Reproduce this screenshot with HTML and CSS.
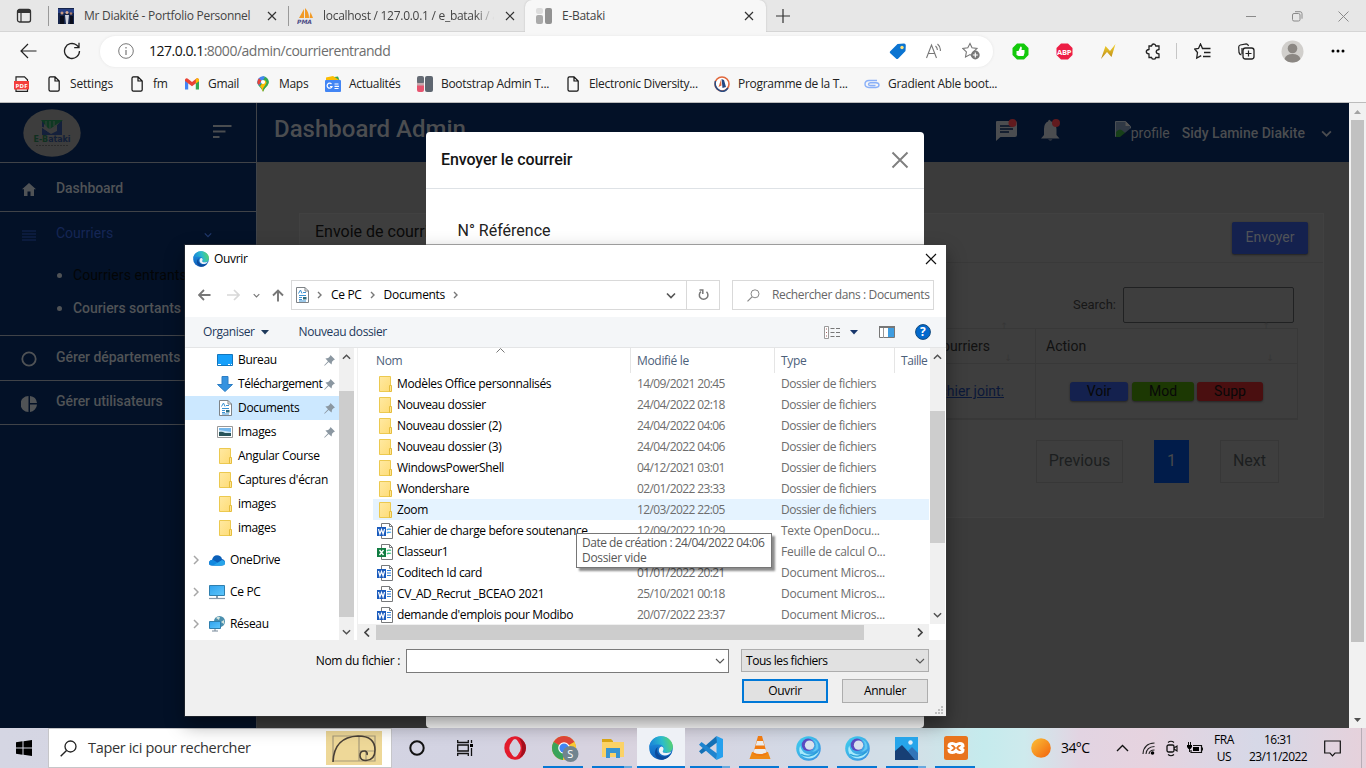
FILE: index.html
```html
<!DOCTYPE html>
<html lang="fr">
<head>
<meta charset="utf-8">
<title>E-Bataki</title>
<link rel="stylesheet" href="styles.css">
</head>
<body>
<svg class="defs" aria-hidden="true">
  <defs>
    <linearGradient id="gFolder" x1="0" y1="0" x2="1" y2="1"><stop offset="0" stop-color="#ffe9a2"/><stop offset="1" stop-color="#fedc77"/></linearGradient>
    <linearGradient id="gEdge" x1="0" y1="0.2" x2="1" y2="0"><stop offset="0" stop-color="#1b86d8"/><stop offset=".5" stop-color="#2bbccb"/><stop offset="1" stop-color="#62d957"/></linearGradient>
    <linearGradient id="gEdge2" x1="0" y1="0" x2="0" y2="1"><stop offset="0" stop-color="#1f9ae6"/><stop offset="1" stop-color="#0f5cb8"/></linearGradient>
    <linearGradient id="gSun" x1="0" y1="0" x2="1" y2="1"><stop offset="0" stop-color="#fbc238"/><stop offset="1" stop-color="#f2620c"/></linearGradient>
    <linearGradient id="gScreen" x1="0" y1="0" x2="1" y2="1"><stop offset="0" stop-color="#2fa2ee"/><stop offset="1" stop-color="#5ec6fb"/></linearGradient>
    <linearGradient id="gSwirl" x1="0" y1="0" x2="1" y2="1"><stop offset="0" stop-color="#3fd0ee"/><stop offset="1" stop-color="#3a8de0"/></linearGradient>
    <linearGradient id="gBolt" x1="0" y1="0" x2="0" y2="1"><stop offset="0" stop-color="#f5d631"/><stop offset="1" stop-color="#b98414"/></linearGradient>
  </defs>
  <symbol id="x" viewBox="0 0 10 10"><path d="M1 1l8 8M9 1l-8 8" fill="none" stroke="currentColor" stroke-width="1.200"/></symbol>
  <symbol id="page" viewBox="0 0 12 16"><path d="M1 2.200Q1 .8 2.400.8H7l4.200 4.200v8.800q0 1.400-1.400 1.400H2.400Q1 15.200 1 13.800zM7 .8V5h4.200" fill="none" stroke="#111" stroke-width="1.200"/></symbol>
  <symbol id="folder" viewBox="0 0 13 16"><path d="M.5.5h11v15H.5z" fill="url(#gFolder)" stroke="#ecc94f"/><path d="M10.500 9.500h2v6h-2z" fill="#ffe592" stroke="#e5bd3d"/></symbol>
  <symbol id="doc" viewBox="0 0 13 16"><path d="M.5.5h8.500l3.500 3.500v11.500H.5z" fill="#fff" stroke="#7e8387"/><path d="M9 .5V4h3.500" fill="none" stroke="#7e8387"/><path d="M2.500 6.500L4.500 3 6 6.500M7 5.500h3M3 8.500h7M3 10.500h3M3 12.500h3M3 14h7" fill="none" stroke="#3b92d2"/><path d="M7 10h3.500v2.500H7z" fill="#2c6a7d"/></symbol>
  <symbol id="word" viewBox="0 0 16 16"><path d="M4.500.5h8l3 3v12h-11z" fill="#fff" stroke="#77797b"/><path d="M12.500.5v3h3" fill="none" stroke="#77797b"/><path d="M10 5.500h4M10 8h4M10 10.500h4" stroke="#2c7cd6"/><path d="M0 4h9v9H0z" fill="#185abd"/><path d="M1.500 6l1.400 5 1.600-4.500 1.600 4.500 1.400-5" fill="none" stroke="#fff" stroke-width="1.200"/></symbol>
  <symbol id="wordodt" viewBox="0 0 16 16"><path d="M4.500.5h8l3 3v12h-11z" fill="#fff" stroke="#77797b"/><path d="M12.500.5v3h3" fill="none" stroke="#77797b"/><path d="M10 7c1.500-2 2.500 0 4-1M10 10c1.500-1.500 2.500 0 4-1" fill="none" stroke="#45a2ea" stroke-width="1.400"/><path d="M0 4h9v9H0z" fill="#185abd"/><path d="M1.500 6l1.400 5 1.600-4.500 1.600 4.500 1.400-5" fill="none" stroke="#fff" stroke-width="1.200"/></symbol>
  <symbol id="excel" viewBox="0 0 16 16"><path d="M4.500.5h8l3 3v12h-11z" fill="#fff" stroke="#77797b"/><path d="M12.500.5v3h3" fill="none" stroke="#77797b"/><path d="M10 7c1.500-2 2.500 0 4-1M10 10c1.500-1.500 2.500 0 4-1" fill="none" stroke="#3fc283" stroke-width="1.400"/><path d="M0 4h9v9H0z" fill="#107c41"/><path d="M2.500 6l4 5M6.500 6l-4 5" stroke="#fff" stroke-width="1.400"/></symbol>
  <symbol id="pin" viewBox="0 0 11 11"><path d="M6.500 0L11 4.500 9.800 5 8 6.800 7.600 9.600 4.600 6.900.7 10.700.2 10.200 4 6.300 1.400 3.500 4.200 3 6 1.200z" fill="#8b97a1"/></symbol>
  <symbol id="chev" viewBox="0 0 10 6"><path d="M1 1l4 4 4-4" fill="none" stroke="currentColor" stroke-width="1.600"/></symbol>
  <symbol id="edge" viewBox="0 0 24 24"><circle cx="12" cy="12" r="11.800" fill="url(#gEdge2)"/><path d="M.3 11C1 4 6.500.2 12 .2c7 0 11.800 5 11.800 10.200 0 4-3 6.400-6.300 6.400-3 0-4.300-1.200-3.500-2.300 1.600-2.600.2-6-4.500-6-3.500 0-7.500.5-9.200 2.500z" fill="url(#gEdge)"/><path d="M8.800 11c-2.200 5 1 10.500 8 9.500 2.300-.4 4-1.500 5.400-3.200C20 21.500 16.500 23.800 12.500 23.800 6 23.500 3.500 14.500 8.800 11z" fill="#0b4a9c"/><path d="M12.800 10.500c2 .8 2.300 2.700 1.200 4.200-.9 1.300.5 2.300 3.500 2.300 2 0 3.800-.8 5-1.700-1.500 3.200-4.500 4.400-7 4.200-4-.3-6.300-3.500-5.500-6.500.4-1.500 1.500-2.500 2.800-2.500z" fill="#ecf2f8"/></symbol>
  <symbol id="swirl" viewBox="0 0 24 24"><circle cx="12" cy="12" r="11.800" fill="url(#gSwirl)"/><path d="M4 9c-3 7 2 12.500 9 12.500 5 0 8-3.500 9.500-7.500-3 4-7 4.500-11 3.500C7 16.500 5 13 4 9z" fill="#a6e9fb"/><path d="M5 17.500c4 3 11 2.500 15.500-2.500" fill="none" stroke="#259fd9" stroke-width="1.300"/><circle cx="11.500" cy="8.500" r="6" fill="#5b4bc0"/><circle cx="13" cy="8.800" r="4.500" fill="#d9e2ed"/><path d="M15 3q7 1 6.500 9-2 3-6 3 4-2 3.500-6.500T15 3z" fill="#63c9f3"/></symbol>
</svg>

<header class="tabs">
  <svg class="tab-actions" width="16" height="16" viewBox="0 0 16 16"><rect x="1.500" y="1.500" width="13" height="12.500" rx="2" fill="none" stroke="#333" stroke-width="1.300"/><path d="M1.500 2h13v3h-13z" fill="#333"/><path d="M5 4v10" stroke="#333" stroke-width="1.200"/></svg>
  <div class="tab tab-one">
    <svg width="16" height="16" viewBox="0 0 16 16"><path d="M0 0h16v16H0z" fill="#16254b"/><path d="M0 1h16v4H0z" fill="#273f83"/><circle cx="4" cy="5" r="1.500" fill="#c79a86"/><circle cx="9" cy="4.500" r="1.500" fill="#d8ab94"/><circle cx="13" cy="5.500" r="1.300" fill="#a87b6b"/><path d="M7 7h4l-1 9H8z" fill="#cfd3de"/><path d="M2 8h4v8H2zM12 8h3v8h-3z" fill="#0a0d1c"/></svg>
    <span class="tab-title">Mr Diakité - Portfolio Personnel</span><svg class="tx" width="10" height="10"><use href="#x"/></svg>
  </div>
  <div class="tab tab-two">
    <svg width="17" height="16" viewBox="0 0 17 16"><path d="M2 10L7 1v9zM8 10V0c3 3 4 6 4 10zM12.500 10l1-6 2.500 6z" fill="#f29a25"/><text x="0" y="16" class="pma">PMA</text></svg>
    <span class="tab-title two">localhost / 127.0.0.1 / e_bataki / a</span><svg class="tx" width="10" height="10"><use href="#x"/></svg>
  </div>
  <div class="tab tab-active">
    <svg width="16" height="16" viewBox="0 0 16 16"><rect width="7" height="6" rx="2" fill="#ddd"/><rect y="7" width="7" height="9" rx="2" fill="#aaa"/><rect x="9" width="7" height="16" rx="2" fill="#929292"/></svg>
    <span class="tab-title">E-Bataki</span><svg class="tx" width="10" height="10"><use href="#x"/></svg>
  </div>
  <svg class="new-tab" width="14" height="14" viewBox="0 0 14 14"><path d="M7 0v14M0 7h14" stroke="#333" stroke-width="1.200"/></svg>
  <div class="win">
    <svg width="11" height="11" viewBox="0 0 11 11"><path d="M0 5.500h10" stroke="#8a8a8a"/></svg>
    <svg width="11" height="11" viewBox="0 0 11 11"><rect x=".5" y="2.500" width="7.500" height="7.500" rx="1.500" fill="none" stroke="#8a8a8a"/><path d="M3 .7h5q2 0 2 2v5" fill="none" stroke="#8a8a8a"/></svg>
    <svg width="11" height="11" viewBox="0 0 11 11"><path d="M.5.5l10 10M10.500.5l-10 10" stroke="#8a8a8a"/></svg>
  </div>
</header>

<nav class="toolbar">
  <svg class="back" width="17" height="16" viewBox="0 0 17 16"><path d="M16.500 8H1.500M8 1L1 8l7 7" fill="none" stroke="#222" stroke-width="1.200"/></svg>
  <svg class="reload" width="18" height="18" viewBox="0 0 18 18"><path d="M16.500 9A7.500 7.500 0 1 1 13.500 3L16 5.200M16 .8v4.800h-4.800" fill="none" stroke="#222" stroke-width="1.300"/></svg>
  <div class="address">
    <svg width="16" height="16" viewBox="0 0 16 16"><circle cx="8" cy="8" r="7.300" fill="none" stroke="#777"/><path d="M8 7v5M8 4v1.500" stroke="#777" stroke-width="1.200"/></svg>
    <span class="url"><b>127.0.0.1</b>:8000/admin/courrierentrandd</span>
    <svg class="tag" width="18" height="17" viewBox="0 0 18 17"><path d="M1 8.500L8.500 1 15 .5Q16.800.5 16.800 2.500L16.500 8 9 15.700Q8 16.500 7 15.500L1 10Q.5 9.300 1 8.500z" fill="#0b74d1"/><circle cx="13" cy="4.500" r="1.700" fill="#ffe27a"/></svg>
    <svg width="16" height="16" viewBox="0 0 16 16"><path d="M.5 15L5.500 2l5 13M2.300 10.500h6.500M9.500 3q2 1.800 1.800 4M11.500 1q3.500 3 2.800 7" fill="none" stroke="#777" stroke-width="1.100"/></svg>
    <svg class="fav" width="18" height="18" viewBox="0 0 18 18"><path d="M8 1.500l2 4.300 5 .7-3.600 3.400.8 5L8 12.600l-4.500 2.300.9-5L.8 6.500l5-.7z" fill="none" stroke="#777" stroke-width="1.100"/><circle cx="13.300" cy="13" r="4.400" fill="#777"/><path d="M13.300 10.500v5M10.800 13h5" stroke="#fff" stroke-width="1.200"/></svg>
  </div>
  <div class="ext">
    <svg width="17" height="17" viewBox="0 0 17 17"><path d="M5 .5h7L16.500 5v7L12 16.500H5L.5 12V5z" fill="#13c90b"/><path d="M4.500 8h2l2-4.500c1.500 0 1.500 1 1 3.500h3v3l-1 3h-5l-2-1z" fill="#fff"/></svg>
    <svg width="17" height="17" viewBox="0 0 17 17"><path d="M5 .5h7L16.500 5v7L12 16.500H5L.5 12V5z" fill="#ed1e45"/><text x="1" y="11.500" class="abp">ABP</text></svg>
    <svg width="17" height="17" viewBox="0 0 17 17"><path d="M1 16L5.500 3l4.500 5 5.500-7L11.500 14 7 9z" fill="url(#gBolt)"/></svg>
    <svg width="17" height="17" viewBox="0 0 17 17"><path d="M4 3h2.500q.5-2 2.200-2t2.100 2H14v3.500q-2.800.5-2.800 2.300T14 11v3.500h-3.200q-.4 1.700-2.100 1.700t-2.200-1.700H4V11Q1.300 10.500 1.300 8.700T4 6.500z" fill="none" stroke="#222" stroke-width="1.300"/></svg>
    <i class="sep"></i>
    <svg width="17" height="17" viewBox="0 0 17 17"><path d="M9.500 5.500h-1L6.500 1 4.500 5.500.7 6l2.800 3.500-.8 5.500 4.500-2.300M9.500 5.500h7M10 9.500h6.500M9 13.500h7.500" fill="none" stroke="#222" stroke-width="1.300"/></svg>
    <svg width="17" height="17" viewBox="0 0 17 17"><path d="M3.500 12Q1.500 11.500 1 9.500L.7 4Q.8 2.500 2.300 2l6-1.200Q10 .8 10.500 3M4 5v6" fill="none" stroke="#222" stroke-width="1.200"/><rect x="5" y="5" width="11" height="11" rx="2.500" fill="#f7f7f7" stroke="#222" stroke-width="1.300"/><path d="M10.500 7.500v6M7.500 10.500h6" stroke="#222" stroke-width="1.200"/></svg>
    <svg width="23" height="23" viewBox="0 0 23 23"><circle cx="11.500" cy="11.500" r="11" fill="#d1cfcc"/><circle cx="11.500" cy="8.500" r="4.800" fill="#8b8783"/><path d="M3.500 19Q5 14 11.500 14t8 5q-3 3.500-8 3.500t-8-3.500z" fill="#8b8783"/></svg>
    <svg width="14" height="4" viewBox="0 0 14 4"><circle cx="2" cy="2" r="1.500"/><circle cx="7" cy="2" r="1.500"/><circle cx="12" cy="2" r="1.500"/></svg>
  </div>
</nav>

<nav class="bookmarks">
  <svg class="bk-pdf" width="16" height="16" viewBox="0 0 16 16"><path d="M2 6V.8h8.500l3 3V6M2 13v2.300h11.500V13" fill="none" stroke="#222" stroke-width="1.200"/><path d="M0 5h15v8.500H0z" fill="#f33f3a"/><text x="1.500" y="12" class="pdf">PDF</text></svg>
  <span class="bk b1"><svg width="12" height="16"><use href="#page"/></svg>Settings</span>
  <span class="bk b2"><svg width="12" height="16"><use href="#page"/></svg>fm</span>
  <span class="bk b3"><svg width="14" height="12" viewBox="0 0 14 12"><path d="M0 2v9.500h3.200V5z" fill="#4285f4"/><path d="M14 2v9.500h-3.200V5z" fill="#34a853"/><path d="M0 3V1.500Q1.500-.5 3.200 1L7 4l3.800-3Q12.500-.5 14 1.500V3L7 8.300z" fill="#ea4335"/><path d="M10.800 1Q12.500-.5 14 1.500V3.200l-3.200 2.400z" fill="#fbbc04"/></svg>Gmail</span>
  <span class="bk b4"><svg width="12" height="16" viewBox="0 0 12 16"><path d="M6 .3A5.600 5.600 0 0 1 11.700 6c0 4-4.200 5.500-5.700 9.700C4.500 11.500.3 10 .3 6z" fill="#34a853"/><path d="M.3 6A5.700 5.700 0 0 1 6 .3L8 1 2.300 9.700Q.3 8 .3 6z" fill="#4285f4"/><path d="M1.800 2.200L4.500 4.500 2 9Q.3 8 .3 6z" fill="#ea4335"/><path d="M3 10.300L8 4l3 4.500q-4 3-5 7.200Q5 12 3 10.300z" fill="#fbbc04"/><path d="M11.700 6Q11.500 9 8 12q-1.500 2-2 3.700Q5 13 8 9.500L11 4z" fill="#34a853"/><circle cx="6" cy="6" r="2.100" fill="#fff"/></svg>Maps</span>
  <span class="bk b5"><svg width="16" height="16" viewBox="0 0 16 16"><path d="M2 2l11-1.500 2 5H2z" fill="#34a853"/><path d="M1 1.500l7-1.500 6 4v3H1z" fill="#fbbc04"/><rect y="4" width="16" height="12" rx="1" fill="#4285f4"/><path d="M6.500 8A2.500 2.500 0 1 0 7 10.500H5M9.500 8h4M9.500 10.300h4.500M9.500 12.500h4" fill="none" stroke="#fff" stroke-width="1.200"/></svg>Actualités</span>
  <span class="bk b6"><svg width="16" height="16" viewBox="0 0 16 16"><rect y="6" width="7" height="10" rx="2" fill="#e7546f"/><rect width="7" height="8" rx="2" fill="#666c75"/><rect y="7" width="7" height="2.500" fill="#c6a9ae"/><rect x="8" width="8" height="16" rx="2" fill="#5e6670"/></svg>Bootstrap Admin T...</span>
  <span class="bk b7"><svg width="12" height="16"><use href="#page"/></svg>Electronic Diversity...</span>
  <span class="bk b8"><svg width="16" height="16" viewBox="0 0 16 16"><circle cx="8" cy="8" r="7" fill="#fff" stroke="#e1683c" stroke-width="1.600"/><path d="M1.500 5Q0 11 5 14.200T14 12" fill="none" stroke="#284d85" stroke-width="1.500"/><path d="M7.500 3l2.500 1 2 7-3.500 1z" fill="#244882"/><path d="M7 3.500L4.500 11l3-1.500z" fill="#e1683c"/></svg>Programme de la T...</span>
  <span class="bk b9"><svg width="16" height="12" viewBox="0 0 16 12"><path d="M13 2.500H5Q1 2.700 1 6t4 3.500h7q3-.3 3-2.500T12 4.700H6.500Q4.500 5 4.500 6.200T6.500 7.500h5" fill="none" stroke="#8ab0f8" stroke-width="1.400"/></svg>Gradient Able boot...</span>
</nav>

<main class="viewport">
  <div class="app">
    <aside class="side">
      <div class="brand">
        <svg width="58" height="48" viewBox="0 0 58 48"><ellipse cx="29" cy="24" rx="28.700" ry="23.800" fill="#3d3d3d"/><path d="M19 12h20v14H19z" fill="#14203b"/><path d="M21 14h13v8l-6 3-7-5z" fill="#3d3d3d"/><path d="M18 11h22l-4 3-8 8-6-6z" fill="#0f3822"/><path d="M23 12v6M27 12v8M31 12v5" stroke="#3a423c"/><path d="M16 17l11 7 10-11-10 7z" fill="#3d3d3d"/><text x="10.500" y="33" class="lg" textLength="37"><tspan fill="#103020">E-B</tspan><tspan fill="#132038">ataki</tspan></text><path d="M13 36.500h33" stroke="#2b2b2b" stroke-dasharray="2 1"/></svg>
        <svg class="burger" width="19" height="13" viewBox="0 0 19 13"><path d="M0 1h18.500M0 6.500h12.500M0 12h6.500" stroke="#4a4d50" stroke-width="1.800"/></svg>
      </div>
      <a class="item i-dash"><svg width="14" height="13" viewBox="0 0 14 13"><path d="M7 0l7 6.300h-2V13H8.500V8.500h-3V13H2V6.300H0z" fill="#505356"/></svg>Dashboard</a>
      <div class="group">
        <a class="item i-cour"><svg width="14" height="11" viewBox="0 0 14 11"><path d="M0 1h14M0 4h14M0 7h14M0 10h14" stroke="#152655" stroke-width="1.200"/></svg>Courriers<svg class="cv" width="8" height="6"><use href="#chev"/></svg></a>
        <a class="sub dark"><i></i>Courriers entrants</a>
        <a class="sub"><i></i>Couriers sortants</a>
      </div>
      <a class="item i-dep"><svg width="16" height="16" viewBox="0 0 16 16"><circle cx="8" cy="8" r="6.700" fill="none" stroke="#505356" stroke-width="1.800"/></svg>Gérer départements</a>
      <a class="item i-usr"><svg width="16" height="16" viewBox="0 0 16 16"><path d="M7.500 0v16A8 8 0 0 1 7.500 0zM9 0a8 8 0 0 1 7 7H9zM9 8.500h7A8 8 0 0 1 9 16z" fill="#505356"/></svg>Gérer utilisateurs</a>
    </aside>
    <section class="content">
      <header class="top">
        <h1>Dashboard Admin</h1>
        <div class="top-right">
          <svg class="msg" width="23" height="23" viewBox="0 0 23 23"><path d="M1 2h18q2 0 2 2v12q0 2-2 2H4.500L0 22V3q0-1 1-1z" fill="#4b4d50"/><path d="M4 7h13M4 10h13M4 13h9" stroke="#051126" stroke-width="1.500"/><circle cx="16.500" cy="4" r="4" fill="#611a1e"/></svg>
          <svg class="bell" width="20" height="23" viewBox="0 0 20 23"><path d="M9 2q6 1 6.500 8v6l3 3.500H0L3 16v-6q0-6 4-7.500Q8-1 10 2.500M7 20.500h4.500q-2 2-4.500 0z" fill="#4b4d50"/><circle cx="15" cy="4" r="4" fill="#611a1e"/></svg>
          <svg width="16" height="17" viewBox="0 0 16 17"><path d="M.5.5h10l5 5v10H.5z" fill="#303945" stroke="#4a4f54"/><path d="M1 11q4-5 8 0l6 5H1z" fill="#174019"/><path d="M10.500 0v5h5z" fill="#555"/><path d="M5 16L16 7v9z" fill="#051126"/></svg>
          <span class="alt">profile</span><b class="user">Sidy Lamine Diakite</b><svg class="ucv" width="11" height="7"><use href="#chev"/></svg>
        </div>
      </header>
      <div class="card">
        <div class="card-head"><h2>Envoie de courriers</h2><span class="btn send">Envoyer</span></div>
        <div class="card-body">
          <div class="search">Search:<span class="box"></span></div>
          <div class="table">
            <div class="th joint">Courriers<em class="up">↑</em><em class="dn">↓</em></div><div class="th">Action<em class="up">↑</em><em class="dn">↓</em></div>
            <div class="td joint"><u>Fichier joint:</u></div><div class="td acts"><span class="pill voir">Voir</span><span class="pill mod">Mod</span><span class="pill supp">Supp</span></div>
          </div>
          <div class="pager"><span class="pg prev">Previous</span><span class="pg cur">1</span><span class="pg next">Next</span></div>
        </div>
      </div>
    </section>
  </div>
  <div class="page-scroll"><svg width="7" height="4" viewBox="0 0 7 4"><path d="M0 4L3.500 0 7 4z" fill="#a3a3a3"/></svg><i></i><svg width="7" height="4" viewBox="0 0 7 4"><path d="M0 0L3.500 4 7 0z" fill="#505050"/></svg></div>

  <div class="modal">
    <div class="modal-head"><span>Envoyer le courreir</span><svg width="18" height="18" viewBox="0 0 18 18"><path d="M1.500 1.500l15 15M16.500 1.500l-15 15" stroke="#7f7f7f" stroke-width="1.900"/></svg></div>
    <label class="modal-label">N° Référence</label>
  </div>
</main>

<div class="dialog">
  <div class="d-title"><svg width="16" height="16"><use href="#edge"/></svg><span>Ouvrir</span><svg class="dx" width="12" height="12" viewBox="0 0 12 12"><path d="M1 1l10 10M11 1L1 11" stroke="#111" stroke-width="1.200"/></svg></div>
  <div class="d-nav">
    <svg class="n1" width="13" height="12" viewBox="0 0 13 12"><path d="M12.500 6H1.500M6 1L1 6l5 5" fill="none" stroke="#777" stroke-width="1.800"/></svg>
    <svg class="n2" width="13" height="12" viewBox="0 0 13 12"><path d="M0 6h11.500M7 1l5 5-5 5" fill="none" stroke="#d8d8d8" stroke-width="1.700"/></svg>
    <svg class="n3" width="7" height="5"><use href="#chev"/></svg>
    <svg class="n4" width="12" height="13" viewBox="0 0 12 13"><path d="M6 12.500V1.500M1 6.500l5-5 5 5" fill="none" stroke="#777" stroke-width="1.900"/></svg>
    <div class="d-addr"><svg width="13" height="16"><use href="#doc"/></svg><svg class="sepc" width="5" height="8" viewBox="0 0 5 8"><path d="M1 1l3 3-3 3" fill="none" stroke="#777" stroke-width="1.400"/></svg><span class="cepc">Ce PC</span><svg class="sepc" width="5" height="8" viewBox="0 0 5 8"><path d="M1 1l3 3-3 3" fill="none" stroke="#777" stroke-width="1.400"/></svg><span class="docs">Documents</span><svg class="sepc" width="5" height="8" viewBox="0 0 5 8"><path d="M1 1l3 3-3 3" fill="none" stroke="#777" stroke-width="1.400"/></svg><svg class="drop" width="10" height="7"><use href="#chev"/></svg><div class="d-ref"><svg width="11" height="12" viewBox="0 0 11 12"><path d="M8.500 2.800A4.300 4.300 0 1 1 3 2.600M1.500 1h3.300v4" fill="none" stroke="#777" stroke-width="1.500"/></svg></div></div>
    <div class="d-search"><svg width="13" height="13" viewBox="0 0 13 13"><circle cx="8" cy="4.800" r="4" fill="none" stroke="#888"/><path d="M5 7.800L.5 12.300" stroke="#888" stroke-width="1.200"/></svg><span>Rechercher dans : Documents</span></div>
  </div>
  <div class="d-tools"><span class="org">Organiser</span><svg class="tri" width="8" height="5" viewBox="0 0 8 5"><path d="M0 0h8L4 4.500z" fill="#1e395b"/></svg><span class="newd">Nouveau dossier</span>
    <svg class="vw" width="17" height="13" viewBox="0 0 17 13"><path d="M.5.5h4v12h-4z" fill="#fff" stroke="#999"/><path d="M2 3h1M2 6.500h1M2 10h1" stroke="#a66"/><path d="M6.500 2.500h4M12 2.500h4M6.500 6.500h4M12 6.500h4M6.500 10.500h4M12 10.500h4" stroke="#777"/></svg><svg class="tri2" width="8" height="5" viewBox="0 0 8 5"><path d="M0 0h8L4 4.500z" fill="#17366b"/></svg>
    <svg class="pane" width="16" height="12" viewBox="0 0 16 12"><path d="M.5.5h15v11H.5z" fill="#fff" stroke="#777"/><path d="M0 0h16v2H0z" fill="#777"/><path d="M4.500 2v10" stroke="#999"/><path d="M9 2h6v9H9z" fill="#3f9de0"/></svg>
    <svg width="16" height="16" viewBox="0 0 16 16"><circle cx="8" cy="8" r="7.400" fill="#0269cd" stroke="#124a7d"/><text x="5" y="12.300" class="q">?</text></svg></div>
  <div class="d-main">
    <div class="tree">
      <div class="t lv2"><svg width="16" height="12" viewBox="0 0 16 12"><path d="M.5.5h15v11H.5z" fill="#16a0fb" stroke="#1276bd"/><path d="M1 10.500h3M11 10.500h2M14 10.500h1" stroke="#fff"/></svg><span>Bureau</span><svg class="pn" width="11" height="11"><use href="#pin"/></svg></div>
      <div class="t lv2"><svg width="16" height="16" viewBox="0 0 16 16"><path d="M5 .5h6v8h4.500L8 15.500.5 8.500H5z" fill="#3693e0" stroke="#2c7ec5"/></svg><span class="tel">Téléchargement</span><svg class="pn" width="11" height="11"><use href="#pin"/></svg></div>
      <div class="t lv2 sel"><svg width="16" height="16" viewBox="-2 0 16 16"><use href="#doc" width="13" height="16"/></svg><span>Documents</span><svg class="pn" width="11" height="11"><use href="#pin"/></svg></div>
      <div class="t lv2"><svg width="16" height="12" viewBox="0 0 16 12"><path d="M.5.5h15v11H.5z" fill="#fff" stroke="#999"/><path d="M2 2h12v8H2z" fill="#75b7eb"/><path d="M2 4q6 1 12 2v1H2z" fill="#cde6f5"/><path d="M2 6q3-1 6 1l6 0v3H2z" fill="#28545a"/></svg><span>Images</span><svg class="pn" width="11" height="11"><use href="#pin"/></svg></div>
      <div class="t lv2"><svg width="16" height="16" viewBox="-2 0 16 16"><use href="#folder" width="13" height="16"/></svg><span>Angular Course</span></div>
      <div class="t lv2"><svg width="16" height="16" viewBox="-2 0 16 16"><use href="#folder" width="13" height="16"/></svg><span>Captures d'écran</span></div>
      <div class="t lv2"><svg width="16" height="16" viewBox="-2 0 16 16"><use href="#folder" width="13" height="16"/></svg><span>images</span></div>
      <div class="t lv2"><svg width="16" height="16" viewBox="-2 0 16 16"><use href="#folder" width="13" height="16"/></svg><span>images</span></div>
      <div class="t lv1"><svg class="ex" width="6" height="10" viewBox="0 0 6 10"><path d="M1 1l4 4-4 4" fill="none" stroke="#a6a6a6" stroke-width="1.500"/></svg><svg width="16" height="11" viewBox="0 0 16 11"><path d="M3 5Q4 .3 8 .3T13 4q3 .5 3 3.500 0 3-3 3H3Q0 10.500 0 8t3-3z" fill="#0a5fb8"/><path d="M0 8q.5-3.500 4-3.200L13 10.500H3Q0 10.500 0 8z" fill="#1288df"/><path d="M4 10.500L13 5q3 .5 3 3t-3 2.500z" fill="#28a5ea"/></svg><span>OneDrive</span></div>
      <div class="t lv1"><svg class="ex" width="6" height="10" viewBox="0 0 6 10"><path d="M1 1l4 4-4 4" fill="none" stroke="#a6a6a6" stroke-width="1.500"/></svg><svg width="16" height="15" viewBox="0 0 16 15"><path d="M.5.5h15v10H.5z" fill="url(#gScreen)" stroke="#2f7fae"/><path d="M7 11h2v2H7z" fill="#89a"/><path d="M0 13.500h16" stroke="#89a" stroke-width="1.200"/></svg><span>Ce PC</span></div>
      <div class="t lv1"><svg class="ex" width="6" height="10" viewBox="0 0 6 10"><path d="M1 1l4 4-4 4" fill="none" stroke="#a6a6a6" stroke-width="1.500"/></svg><svg width="16" height="16" viewBox="0 0 16 16"><circle cx="10.500" cy="5.500" r="5.500" fill="#4b8fad"/><path d="M7 2q2-2 4-1l-1 3zM12 6l3-2v4z" fill="#d2e2dc"/><path d="M.5 5.500h11v7H.5z" fill="url(#gScreen)" stroke="#2f7fae"/><path d="M3 15h6M6 13v2" stroke="#789"/></svg><span>Réseau</span></div>
    </div>
    <div class="vs left"><svg class="flip" width="9" height="6"><use href="#chev"/></svg><i></i><svg width="9" height="6"><use href="#chev"/></svg></div>
    <div class="files">
      <div class="f-area">
        <div class="f-list">
          <div class="fh"><span>Nom<svg class="sort" width="9" height="5" viewBox="0 0 9 5"><path d="M.5 4.500l4-4 4 4" fill="none" stroke="#777"/></svg></span><span>Modifié le</span><span>Type</span><span>Taille</span></div>
          <div class="fr"><svg width="13" height="16"><use href="#folder"/></svg><b>Modèles Office personnalisés</b><span>14/09/2021 20:45</span><span>Dossier de fichiers</span></div>
          <div class="fr"><svg width="13" height="16"><use href="#folder"/></svg><b>Nouveau dossier</b><span>24/04/2022 02:18</span><span>Dossier de fichiers</span></div>
          <div class="fr"><svg width="13" height="16"><use href="#folder"/></svg><b>Nouveau dossier (2)</b><span>24/04/2022 04:06</span><span>Dossier de fichiers</span></div>
          <div class="fr"><svg width="13" height="16"><use href="#folder"/></svg><b>Nouveau dossier (3)</b><span>24/04/2022 04:06</span><span>Dossier de fichiers</span></div>
          <div class="fr"><svg width="13" height="16"><use href="#folder"/></svg><b>WindowsPowerShell</b><span>04/12/2021 03:01</span><span>Dossier de fichiers</span></div>
          <div class="fr"><svg width="13" height="16"><use href="#folder"/></svg><b>Wondershare</b><span>02/01/2022 23:33</span><span>Dossier de fichiers</span></div>
          <div class="fr hov"><svg width="13" height="16"><use href="#folder"/></svg><b>Zoom</b><span>12/03/2022 22:05</span><span>Dossier de fichiers</span></div>
          <div class="fr"><svg width="16" height="16"><use href="#wordodt"/></svg><b>Cahier de charge before soutenance</b><span>12/09/2022 10:29</span><span class="ty">Texte OpenDocu...</span></div>
          <div class="fr"><svg width="16" height="16"><use href="#excel"/></svg><b>Classeur1</b><span></span><span class="ty">Feuille de calcul O...</span></div>
          <div class="fr"><svg width="16" height="16"><use href="#word"/></svg><b>Coditech Id card</b><span>01/01/2022 20:21</span><span class="ty">Document Micros...</span></div>
          <div class="fr"><svg width="16" height="16"><use href="#word"/></svg><b>CV_AD_Recrut _BCEAO 2021</b><span>25/10/2021 00:18</span><span class="ty">Document Micros...</span></div>
          <div class="fr"><svg width="16" height="16"><use href="#word"/></svg><b>demande d'emplois pour Modibo</b><span>20/07/2022 23:37</span><span class="ty">Document Micros...</span></div>
        </div>
        <div class="vs right"><svg class="flip" width="9" height="6"><use href="#chev"/></svg><i></i><svg width="9" height="6"><use href="#chev"/></svg></div>
      </div>
      <div class="hs"><svg width="6" height="9" viewBox="0 0 6 9"><path d="M5 .5l-4 4 4 4" fill="none" stroke="#444" stroke-width="1.700"/></svg><i></i><svg width="6" height="9" viewBox="0 0 6 9"><path d="M1 .5l4 4-4 4" fill="none" stroke="#444" stroke-width="1.700"/></svg></div>
    </div>
  </div>
  <div class="d-foot">
    <div class="f-row"><span class="lbl">Nom du fichier :</span><span class="inp"><svg width="10" height="6" viewBox="0 0 10 6"><path d="M1 1l4 4 4-4" fill="none" stroke="#555" stroke-width="1.100"/></svg></span><span class="selb">Tous les fichiers<svg width="10" height="6" viewBox="0 0 10 6"><path d="M1 1l4 4 4-4" fill="none" stroke="#555" stroke-width="1.100"/></svg></span></div>
    <div class="b-row"><span class="db prim">Ouvrir</span><span class="db">Annuler</span></div>
    <svg class="grip" width="8" height="8" viewBox="0 0 8 8"><path d="M6 0h2v2H6zM3 3h2v2H3zM6 3h2v2H6zM0 6h2v2H0zM3 6h2v2H3zM6 6h2v2H6z" fill="#bfbfbf"/></svg>
  </div>
  <div class="tip"><span>Date de création : 24/04/2022 04:06</span><br>Dossier vide</div>
</div>

<footer class="taskbar">
  <div class="start"><svg width="16" height="16" viewBox="0 0 16 16"><path d="M0 2.200L6.500 1.300v6.200H0zM7.500 1.200L16 0v7.500H7.500zM0 8.500h6.500v6.200L0 13.800zM7.500 8.500H16V16l-8.500-1.200z"/></svg></div>
  <div class="tsearch"><svg width="17" height="17" viewBox="0 0 17 17"><circle cx="10.500" cy="6.500" r="5.500" fill="none" stroke="#222" stroke-width="1.300"/><path d="M6.500 10.500L.7 16.300" stroke="#222" stroke-width="1.400"/></svg><span>Taper ici pour rechercher</span>
    <svg class="gold" width="56" height="34" viewBox="0 0 56 34"><path d="M0 0h56v34H0z" fill="#eed898"/><path d="M7 5h42v25H7zM33 5v25M33 20h16M40 20v10" fill="none" stroke="#a6997a" stroke-width="1.200"/><path d="M7 31Q8 6 32 5q17 0 17 14 0 10-9 10.500-6 0-6-5t5-4.500q3 1 2 4" fill="none" stroke="#494036" stroke-width="1.600"/></svg></div>
  <div class="tk"><svg width="16" height="16" viewBox="0 0 16 16"><circle cx="8" cy="8" r="6.700" fill="none" stroke="#111" stroke-width="2"/></svg></div>
  <div class="tk"><svg width="17" height="16" viewBox="0 0 17 16"><path d="M.7 0v2.500h10.600V0M.7 16v-2.500h10.600V16M.7 5h10.600v6H.7zM14.500 0v3M14.500 8v8" fill="none" stroke="#111" stroke-width="1.300"/><path d="M13 4h3v3h-3z"/></svg></div>
  <div class="tk"><svg width="24" height="24" viewBox="0 0 24 24"><ellipse cx="12" cy="12" rx="8.200" ry="9.300" fill="none" stroke="#e21b2c" stroke-width="5"/><ellipse cx="12" cy="12" rx="4.500" ry="9" fill="#d2d2e0"/><path d="M16 2q7 3 7 10t-7 10q3-4 3-10T16 2z" fill="#a40f1d"/></svg></div>
  <div class="tk run"><svg class="chr" width="28" height="28" viewBox="0 0 28 28"><circle cx="13" cy="13" r="12" fill="#e2a91f"/><path d="M13 13L2.600 7A12 12 0 0 1 23.400 7z" fill="#dc4437"/><path d="M13 13L2.600 7A12 12 0 0 0 12 25z" fill="#3aa35a"/><path d="M13 13l10.400-6A12 12 0 0 1 12 25z" fill="#f8c833"/><circle cx="13" cy="13" r="5.800" fill="#fff"/><circle cx="13" cy="13" r="4.600" fill="#4285f4"/><circle cx="19.500" cy="19" r="8" fill="#71848f"/><text x="16.300" y="23" class="s">S</text></svg></div>
  <div class="tk run more"><svg width="24" height="24" viewBox="0 0 24 24"><path d="M1 3h9l2 2v4H1z" fill="#d9a514"/><path d="M1 6h22v15H1z" fill="#fbd266"/><path d="M5 12h14v10h-4v-5H9v5H5z" fill="#3894d0"/></svg></div>
  <div class="tk run act"><svg width="24" height="24"><use href="#edge"/></svg></div>
  <div class="tk run more"><svg width="24" height="24" viewBox="0 0 24 24"><path d="M17.500 0L24 3v18l-6.500 3z" fill="#26a0ed"/><path d="M17.500 0L0 15.300 2.500 18 18 6.500z" fill="#1470b5"/><path d="M17.500 24L0 8.700 2.500 6 18 17.500z" fill="#1e84cf"/></svg></div>
  <div class="tk run"><svg width="24" height="24" viewBox="0 0 24 24"><path d="M4 16h16l2.500 7h-21z" fill="#ef8a15"/><path d="M10 0h4l5 18q-7 4-14 0z" fill="#f07b11"/><path d="M9 5h6l1.300 4.500H7.700zM6.500 13h11l1 3.500q-6.500 3-13 0z" fill="#ececec"/></svg></div>
  <div class="tk run"><svg width="25" height="25"><use href="#swirl"/></svg></div>
  <div class="tk run"><svg width="25" height="25"><use href="#swirl"/></svg></div>
  <div class="tk run more"><svg width="23" height="23" viewBox="0 0 23 23"><path d="M0 0h23v23H0z" fill="#26a5ea"/><circle cx="15.500" cy="5.500" r="2.200" fill="#dfeefa"/><path d="M0 14l7-6 14 15H0z" fill="#173f75"/><path d="M13 14l4-4 6 6v7h-3z" fill="#3274b8"/></svg></div>
  <div class="tk run"><svg width="24" height="24" viewBox="0 0 24 24"><rect width="24" height="24" rx="2.500" fill="#e8741e"/><path d="M8.500 7.500q-3.500 0-3.500 2.500l2.500 2L5 14q0 2.500 3.500 2.500 2 0 3.500-2 1.500 2 3.500 2 3.500 0 3.500-2.500l-2.500-2 2.500-2q0-2.500-3.500-2.500-2 0-3.500 2-1.500-2-3.500-2z" fill="none" stroke="#fff" stroke-width="3"/></svg></div>
  <div class="tray">
    <svg class="sun" width="20" height="20" viewBox="0 0 20 20"><circle cx="10" cy="10" r="9.800" fill="url(#gSun)"/></svg><span class="temp">34°C</span>
    <svg class="up2" width="13" height="8" viewBox="0 0 13 8"><path d="M1 7l5.500-5.500L12 7" fill="none" stroke="#111" stroke-width="1.400"/></svg>
    <svg class="wifi" width="13" height="13" viewBox="0 0 13 13"><path d="M1 12Q1.500 1.500 12.500 1M4 12q.5-7 8.500-7.500M7 12q.3-4 5.500-4" fill="none" stroke="#222" stroke-width="1.100"/><circle cx="10.500" cy="11" r="1.800"/></svg>
    <svg class="cam" width="12" height="17" viewBox="0 0 12 17"><rect x="1" y="5" width="7" height="7" rx="1.500" fill="none" stroke="#111" stroke-width="1.300"/><path d="M8 8l3-2v5l-3-2M2 2.500Q5 0 8 2.500M2 14.500q3 2.500 6 0" fill="none" stroke="#111" stroke-width="1.100"/></svg>
    <svg class="bat" width="16" height="12" viewBox="0 0 16 12"><path d="M6 3.500h8.500v7H4V8M15.500 5.500v3" fill="none" stroke="#111" stroke-width="1.200"/><path d="M6 5h6v4H6zM0 3h5v2L3.500 7h-2L0 5z"/><path d="M1.500 3V0M3.500 3V0M2.500 7v3" stroke="#111"/></svg>
    <span class="lang">FRA<br>US</span><span class="clock">16:31<br><i>23/11/2022</i></span>
    <svg class="note" width="17" height="17" viewBox="0 0 17 17"><path d="M.7 1h15.600v12H11l-2.500 2.800L6 13H.7z" fill="none" stroke="#111" stroke-width="1.200"/></svg>
    <i class="peek"></i>
  </div>
</footer>
</body>
</html>
```
FILE: styles.css
```css
* { box-sizing: border-box; }
html, body { margin: 0; width: 1366px; height: 768px; overflow: hidden; }
body { font: 12px/16px "Open Sans", "Noto Sans", sans-serif; letter-spacing: -0.32px; color: #000; display: flex; flex-direction: column; position: relative; }
svg { display: block; flex: none; }
i, em { font-style: normal; display: block; }
.defs { position: absolute; width: 0; height: 0; }
span, b, a { white-space: nowrap; }

/* browser chrome */
.tabs { height: 32px; flex: none; background: #e7e7e7; display: flex; align-items: center; padding-left: 16px; box-shadow: inset 0 -1px #d5d5d5; }
.tab { display: flex; align-items: center; height: 32px; color: #444; }
.tab-title { flex: 1; overflow: hidden; letter-spacing: -0.28px; }
.tab-one { width: 240px; margin-left: 15px; padding: 0 10px 0 11px; gap: 10px; }
.tab-one::before, .tab-two::before { content: ""; width: 1px; height: 20px; background: #999; flex: none; margin-right: -1px; margin-left: -10px; }
.tab-two { width: 238px; padding: 0 10px 0 11px; gap: 9px; }
.tab-two .tab-title { mask-image: linear-gradient(90deg, #000 88%, transparent 99%); }
.tab-active { width: 241px; background: #f7f7f7; border-radius: 7px 7px 0 0; padding: 0 12px 0 11px; gap: 10px; box-shadow: 0 0 2px #bbb; clip-path: inset(0 -2px 0 -2px); }
.tab .tx { color: #333; }
.pma { font: italic bold 6px "DejaVu Sans", sans-serif; fill: #4b4b86; letter-spacing: 0; }
.new-tab { margin-left: 10px; }
.win { margin-left: auto; display: flex; gap: 35px; padding-right: 17px; }
.toolbar { height: 38px; flex: none; background: #f7f7f7; display: flex; align-items: center; padding-left: 20px; }
.reload { margin-left: 26px; }
.address { margin-left: 19px; width: 893px; height: 31px; flex: none; border-radius: 16px; background: #fff; display: flex; align-items: center; padding: 0 13px 0 18px; box-shadow: 0 0 3px #e4e4e4; }
.url { margin-left: 15px; font-size: 14px; letter-spacing: -0.49px; color: #6d6d6d; flex: 1; }
.url b { font-weight: 400; color: #111; }
.tag { margin-right: 19px; }
.fav { margin-left: 20px; }
.ext { display: flex; align-items: center; flex: 1; padding-left: 19px; min-width: 0; }
.ext svg { margin-right: 27px; }
.ext svg:nth-of-type(4) { margin-right: 14px; margin-left: 1px; }
.ext .sep { width: 1px; height: 16px; background: #c6c6c6; margin-right: 17px; }
.ext svg:nth-of-type(6) { margin-right: 26px; }
.ext svg:last-child { margin-right: 0; }
.abp { font: bold 7.500px "Open Sans", sans-serif; fill: #fff; letter-spacing: -0.2px; }
.bookmarks { height: 33px; flex: none; background: #f7f7f7; border-bottom: 1px solid #bcbcbc; display: flex; align-items: center; padding: 0 0 5px 14px; color: #222; }
.bk { display: flex; align-items: center; gap: 9px; letter-spacing: -0.3px; }
.pdf { font: bold 6px "Open Sans", sans-serif; fill: #fff; letter-spacing: 0.3px; }
.bk-pdf { margin-right: 18px; }
.b1 { width: 83px; gap: 10px; letter-spacing: -0.2px; } .b2 { width: 54px; gap: 10px; } .b3 { width: 72px; } .b4 { width: 68px; gap: 10px; } .b5 { width: 92px; gap: 8px; } .b6 { width: 150px; gap: 8px; } .b7 { width: 147px; gap: 10px; } .b8 { width: 150px; gap: 8px; } .b9 { gap: 8px; }

/* dimmed web page */
.viewport { position: relative; height: 625px; flex: none; display: flex; font-family: Roboto, sans-serif; letter-spacing: 0; overflow: hidden; }
.app { width: 1349px; display: flex; background: #3b3b3b; }
.side { width: 257px; background: #031127; border-right: 1px solid #404348; color: #505356; }
.content { flex: 1; min-width: 0; }
.brand { height: 60px; border-bottom: 1px solid #404348; display: flex; align-items: center; padding: 0 25px 0 23px; justify-content: space-between; }
.burger { margin-top: -3px; margin-right: -1px; }
.lg { font: bold 8px "DejaVu Sans", sans-serif; letter-spacing: 0; }
.item { display: flex; align-items: center; font-size: 14px; font-weight: 500; letter-spacing: -0.06px; border-bottom: 1px solid #404348; padding-left: 21px; gap: 20px; height: 49px; }
.i-dash { padding-left: 22px; padding-top: 1px; }
.item svg { margin-top: 4px; }
.group { height: 124px; border-bottom: 1px solid #404348; }
.i-cour { border: 0; height: 45px; color: #152655; padding-left: 22px; padding-bottom: 3px; font-weight: 400; letter-spacing: 0; }
.cv { margin-left: auto; margin-right: 44px; color: #20376a; }
.sub { display: flex; align-items: center; height: 33px; padding-left: 57px; gap: 11px; font-size: 14px; font-weight: 500; letter-spacing: -0.05px; }
.group .item + .sub { margin-top: 1px; }
.sub.dark { color: #030506; font-weight: 400; letter-spacing: 0.1px; }
.sub i { width: 5px; height: 5px; border-radius: 50%; background: #505356; margin-top: 2px; }
.i-dep { height: 45px; } .i-usr { height: 44px; }
.i-dep { padding-bottom: 2px; } .i-usr { padding-bottom: 4px; }
.i-dep svg { margin-top: 4px; } .i-usr svg { margin-top: 6px; }
.i-dep, .i-usr { gap: 19px; }
.top { height: 59px; background: #031127; display: flex; align-items: flex-start; justify-content: space-between; padding: 0 17px; color: #4b4d50; }
h1 { margin: 12px 0 0; font-size: 24px; line-height: 28px; font-weight: 500; }
.top-right { display: flex; align-items: center; height: 59px; font-size: 14px; }
.msg { margin: -5px 22px 0 0; } .bell { margin: -5px 54px 0 0; }
.user { font-weight: 500; margin-left: 12px; } .ucv { margin-left: 16px; margin-top: 2px; }
.top-right > svg:nth-of-type(3) { margin-top: -7px; }
.card { margin: 51px 25px 0 42px; height: 305px; background: #3e3e3e; border: 1px solid #414141; }
.card-head { height: 49px; display: flex; align-items: center; justify-content: space-between; border-bottom: 1px solid #393939; padding: 0 15px; }
h2 { margin: -12px 0 0; font-weight: 400; font-size: 16px; line-height: 20px; color: #0a0a0a; }
.send { width: 76px; height: 32px; border-radius: 2px; background: #14214e; color: #505358; font-size: 14px; line-height: 31px; text-align: center; box-shadow: 0 1px 2px #222; }
.card-body { padding: 24px 25px 0 0; display: flex; flex-direction: column; align-items: flex-end; }
.search { display: flex; align-items: center; gap: 7px; font-size: 13px; color: #171717; margin-right: 4px; }
.box { width: 171px; height: 36px; border: 1px solid #202122; border-radius: 2px; }
.table { margin-top: 5px; width: 398px; display: grid; grid-template-columns: 136px 262px; grid-template-rows: 35px 55px; font-size: 14px; color: #111; border: 1px solid #383838; border-left: 0; }
.th, .td { border-bottom: 1px solid #383838; border-right: 1px solid #383838; padding-left: 10px; line-height: 34px; position: relative; }
.th em { position: absolute; font: 9px/9px "DejaVu Sans", sans-serif; color: #363636; }
.up { right: 27px; top: -7px; } .dn { right: 23px; bottom: 0; }
.joint { padding-right: 45px; text-align: right; }
.td.joint { color: #0b1839; line-height: 54px; padding-right: 31px; }
.acts { display: flex; align-items: center; gap: 4px; padding-left: 34px; padding-top: 1px; }
.pill { height: 19px; line-height: 18px; border-radius: 3px; text-align: center; box-shadow: 0 1px 2px #252525; color: #080808; }
.voir { width: 58px; background: #14214e; } .mod { width: 62px; background: #1c3803; } .supp { width: 66px; background: #4a0f10; margin-left: -1px; }
.pager { display: flex; margin: 20px 19px 0 0; font-size: 16px; line-height: 40px; color: #1c1e20; }
.pg { height: 43px; border: 1px solid #373737; text-align: center; }
.prev { width: 87px; } .cur { width: 35px; margin: 0 31px; background: #011c4a; border-color: #011c4a; color: #47494c; } .next { width: 59px; }
.page-scroll { width: 17px; background: #f1f1f1; display: flex; flex-direction: column; align-items: center; padding: 7px 0 6px; }
.page-scroll i { width: 13px; height: 522px; background: #c1c1c1; margin-top: 6px; margin-bottom: auto; }
.modal { position: absolute; left: 426px; top: 29px; width: 498px; height: 596px; background: #fff; border-radius: 4px; font-size: 16px; color: #141414; }
.modal-head { height: 57px; border-bottom: 1px solid #dee2e6; display: flex; align-items: center; justify-content: space-between; padding: 0 15px; font-size: 16px; font-weight: 500; letter-spacing: -0.1px; }
.modal-label { display: block; margin: 32px 0 0 31.500px; line-height: 20px; color: #222; }

/* file picker */
.dialog { position: absolute; left: 185px; top: 245px; width: 761px; height: 471px; background: #fff; box-shadow: 0 0 0 1px rgba(60,60,60,.45), 0 8px 18px rgba(0,0,0,.42); display: flex; flex-direction: column; }
.d-title { height: 30px; display: flex; align-items: center; gap: 5px; padding: 0 9px 2px 8px; }
.dx { margin-left: auto; }
.d-nav { height: 42px; display: flex; align-items: flex-start; padding: 5px 12px 0 13px; }
.d-nav > svg { margin-top: 9px; }
.n2 { margin-left: 16px; } .d-nav > .n3 { margin: 13px 0 0 13px; color: #777; } .n4 { margin-left: 12px; }
.d-addr { margin-left: 7px; width: 429px; height: 30px; flex: none; border: 1px solid #d9d9d9; display: flex; align-items: center; padding-left: 4px; }
.sepc { margin: 0 9px 0 8px; }
.drop { margin-left: auto; margin-right: 10px; color: #555; }
.d-ref { width: 33px; height: 28px; border-left: 1px solid #d9d9d9; display: grid; place-items: center; }
.d-search { margin-left: 12px; width: 202px; height: 30px; flex: none; border: 1px solid #d9d9d9; display: flex; align-items: center; padding-left: 14px; gap: 12px; color: #666; letter-spacing: -0.37px; }
.d-tools { height: 31px; background: #f4f6f8; border-bottom: 1px solid #e4e5e6; display: flex; align-items: center; padding: 0 15px 0 18px; color: #1e395b; letter-spacing: -0.4px; }
.tri { margin-left: 6px; } .newd { margin-left: 30px; } .vw { margin-left: auto; } .tri2 { margin-left: 9px; } .pane { margin: 0 20px 0 21px; }
.q { font: bold 12px "Open Sans", sans-serif; fill: #fff; }
.d-main { height: 292px; display: flex; }
.tree { width: 154px; }
.t { height: 24px; display: flex; align-items: center; gap: 5px; padding: 0 4px 0 32px; }
.t span { flex: 1; } .t .pn { margin-left: -5px; } .t .tel { letter-spacing: -0.45px; }
.t.sel { background: #cce8ff; }
.t.lv1 { margin-top: 8px; padding-left: 8px; } .ex { margin-right: 5px; }
.vs { width: 15px; background: #f0f0f0; display: flex; flex-direction: column; align-items: center; padding: 6px 0; color: #505050; }
.vs i { width: 15px; background: #cdcdcd; margin-bottom: auto; }
.flip { transform: rotate(180deg); }
.left { padding-bottom: 5px; } .left i { height: 226px; margin-top: 31px; }
.right { width: 15px; } .right i { height: 132px; margin-top: 51px; }
.files { margin-left: 3px; border-left: 1px solid #f0f0f0; flex: 1; display: flex; flex-direction: column; min-width: 0; }
.f-area { height: 276px; display: flex; justify-content: space-between; overflow: hidden; padding-right: 1px; }
.f-list { width: 571px; overflow: hidden; }
.fh { height: 25px; display: grid; grid-template-columns: 273px 144px 120px 34px; color: #4c607a; line-height: 25px; }
.fh span { position: relative; border-right: 1px solid #e5e5e5; padding-left: 6px; height: 25px; }
.fh span:first-child { padding-left: 18px; } .fh span:last-child { border: 0; letter-spacing: -0.45px; }
.sort { position: absolute; left: 138px; top: 0; }
.fr { height: 21px; margin-left: 15px; display: grid; grid-template-columns: 24px 240px 144px 1fr; align-items: center; color: #6d6d6d; }
.fr b { font-weight: 400; color: #000; letter-spacing: -0.36px; }
.fr span { letter-spacing: -0.42px; } .fr b + span { letter-spacing: -0.6px; } .fr .ty { letter-spacing: -0.25px; }
.fr svg { justify-self: start; margin-left: 4px; } .fr svg[width="13"] { margin-left: 6px; }
.fr.hov { background: #e5f3ff; }
.hs { height: 16px; width: 571px; background: #f0f0f0; display: flex; align-items: center; padding: 0 6px; }
.hs i { width: 488px; height: 15px; background: #cdcdcd; margin: 0 auto 0 6px; }
.d-foot { flex: 1; background: #f0f0f0; padding: 9px 17px 0 0; position: relative; }
.f-row, .b-row { display: flex; justify-content: flex-end; align-items: center; }
.lbl { margin-right: 6px; }
.inp { width: 323px; height: 24px; border: 1px solid #7a7a7a; background: #fff; display: flex; align-items: center; justify-content: flex-end; padding-right: 3px; margin-right: 12px; }
.selb { width: 188px; height: 23px; border: 1px solid #adadad; background: #e1e1e1; display: flex; align-items: center; justify-content: space-between; padding: 0 3px 0 4px; margin-top: -1px; letter-spacing: -0.45px; }
.b-row { gap: 14px; margin-top: 6px; padding-right: 1px; }
.db { width: 86px; height: 24px; border: 1px solid #adadad; background: #e1e1e1; text-align: center; line-height: 22px; }
.prim { border: 2px solid #0078d7; line-height: 20px; }
.grip { position: absolute; right: 3px; bottom: 2px; }
.tip { position: absolute; left: 391px; top: 288px; width: 196px; height: 35px; border: 1px solid #767676; background: #fff; color: #575757; padding: 1px 5px; line-height: 15px; box-shadow: 3px 3px 2px rgba(0,0,0,.45); }
.tip span { letter-spacing: -0.49px; }

/* taskbar */
.taskbar { height: 40px; flex: none; display: flex; background: linear-gradient(90deg, #d5d6e3 0, #d3d3e2 34%, #d9d3df 47%, #d2dae7 60%, #d2e0e7 67%, #c5ebed 72%, #ceeaed 75%, #e2d4e2 79%, #e6d3df 84%, #d6d8e7 92%, #e6d1db 100%); }
.start { width: 48px; display: grid; place-items: center; }
.tsearch { width: 344px; border: 1px solid #c6c6c9; background: #fff; display: flex; align-items: center; padding-left: 11px; color: #333; font-size: 14.500px; }
.tsearch span { margin-left: 11px; letter-spacing: -0.33px; }
.gold { margin-left: auto; margin-right: 9px; }
.tk { width: 49px; flex: none; display: grid; place-items: center; position: relative; }
.run::after { content: ""; position: absolute; left: 4px; bottom: 0; width: 40px; height: 2px; background: #0778d4; }
.more::after { background: linear-gradient(90deg, #0778d4 80%, #67a9df 80%); }
.act { background: #eef1f6; background-clip: content-box; padding-right: 1px; }
.act::after { left: 0; width: 48px; }
.chr { margin: 2px 0 0 2px; }
.s { font: 11px "Open Sans", sans-serif; fill: #fff; }
.tray { flex: 1; display: flex; align-items: center; padding-left: 51px; }
.temp { font-size: 14px; margin-left: 10px; width: 44px; letter-spacing: -0.6px; }
.up2 { margin-left: 11px; } .wifi { margin-left: 13px; } .cam { margin-left: 11px; } .bat { margin-left: 9px; }
.lang { margin-left: 10px; width: 22px; text-align: center; line-height: 17px; } .clock { margin-left: 13px; width: 60px; text-align: center; line-height: 17px; letter-spacing: -0.55px; }
.clock i { display: inline; } .note { margin-left: 16px; }
.peek { width: 1px; height: 40px; background: #b8adb6; margin-left: auto; margin-right: 4px; }
```
